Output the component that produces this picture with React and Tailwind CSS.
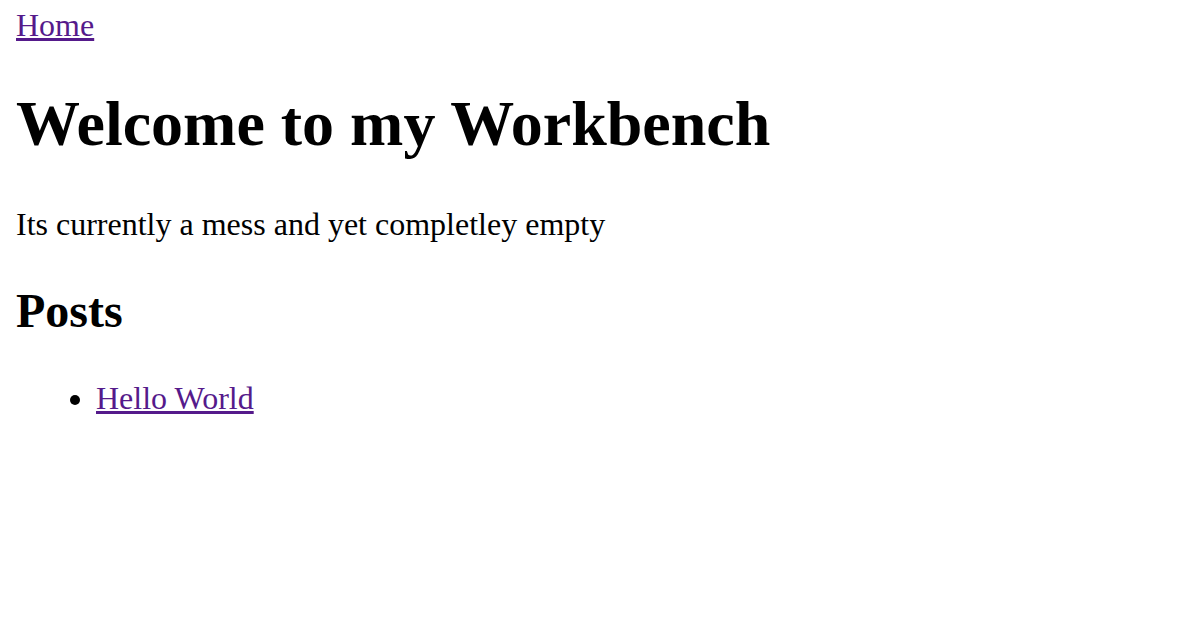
export default function App() {
  const posts = [{ title: 'Hello World', href: '#' }];

  return (
    <div className="min-h-screen bg-white px-4 pt-[7px] text-black font-['Liberation_Serif','Times_New_Roman',serif]">
      <nav className="text-[32px] leading-[36px]">
        <a href="#" className="text-[#551a8b] underline">Home</a>
      </nav>

      <h1 className="mt-[44px] text-[64px] leading-[74px] font-bold">Welcome to my Workbench</h1>
      <p className="mt-[45px] text-[32px] leading-[36px]">Its currently a mess and yet completley empty</p>

      <h2 className="mt-[41px] text-[48px] leading-[55px] font-bold">Posts</h2>
      <ul className="mt-[42px] list-disc pl-[80px] text-[32px] leading-[36px]">
        {posts.map(post => (
          <li key={post.title}>
            <a href={post.href} className="text-[#551a8b] underline">{post.title}</a>
          </li>
        ))}
      </ul>
    </div>
  );
}
